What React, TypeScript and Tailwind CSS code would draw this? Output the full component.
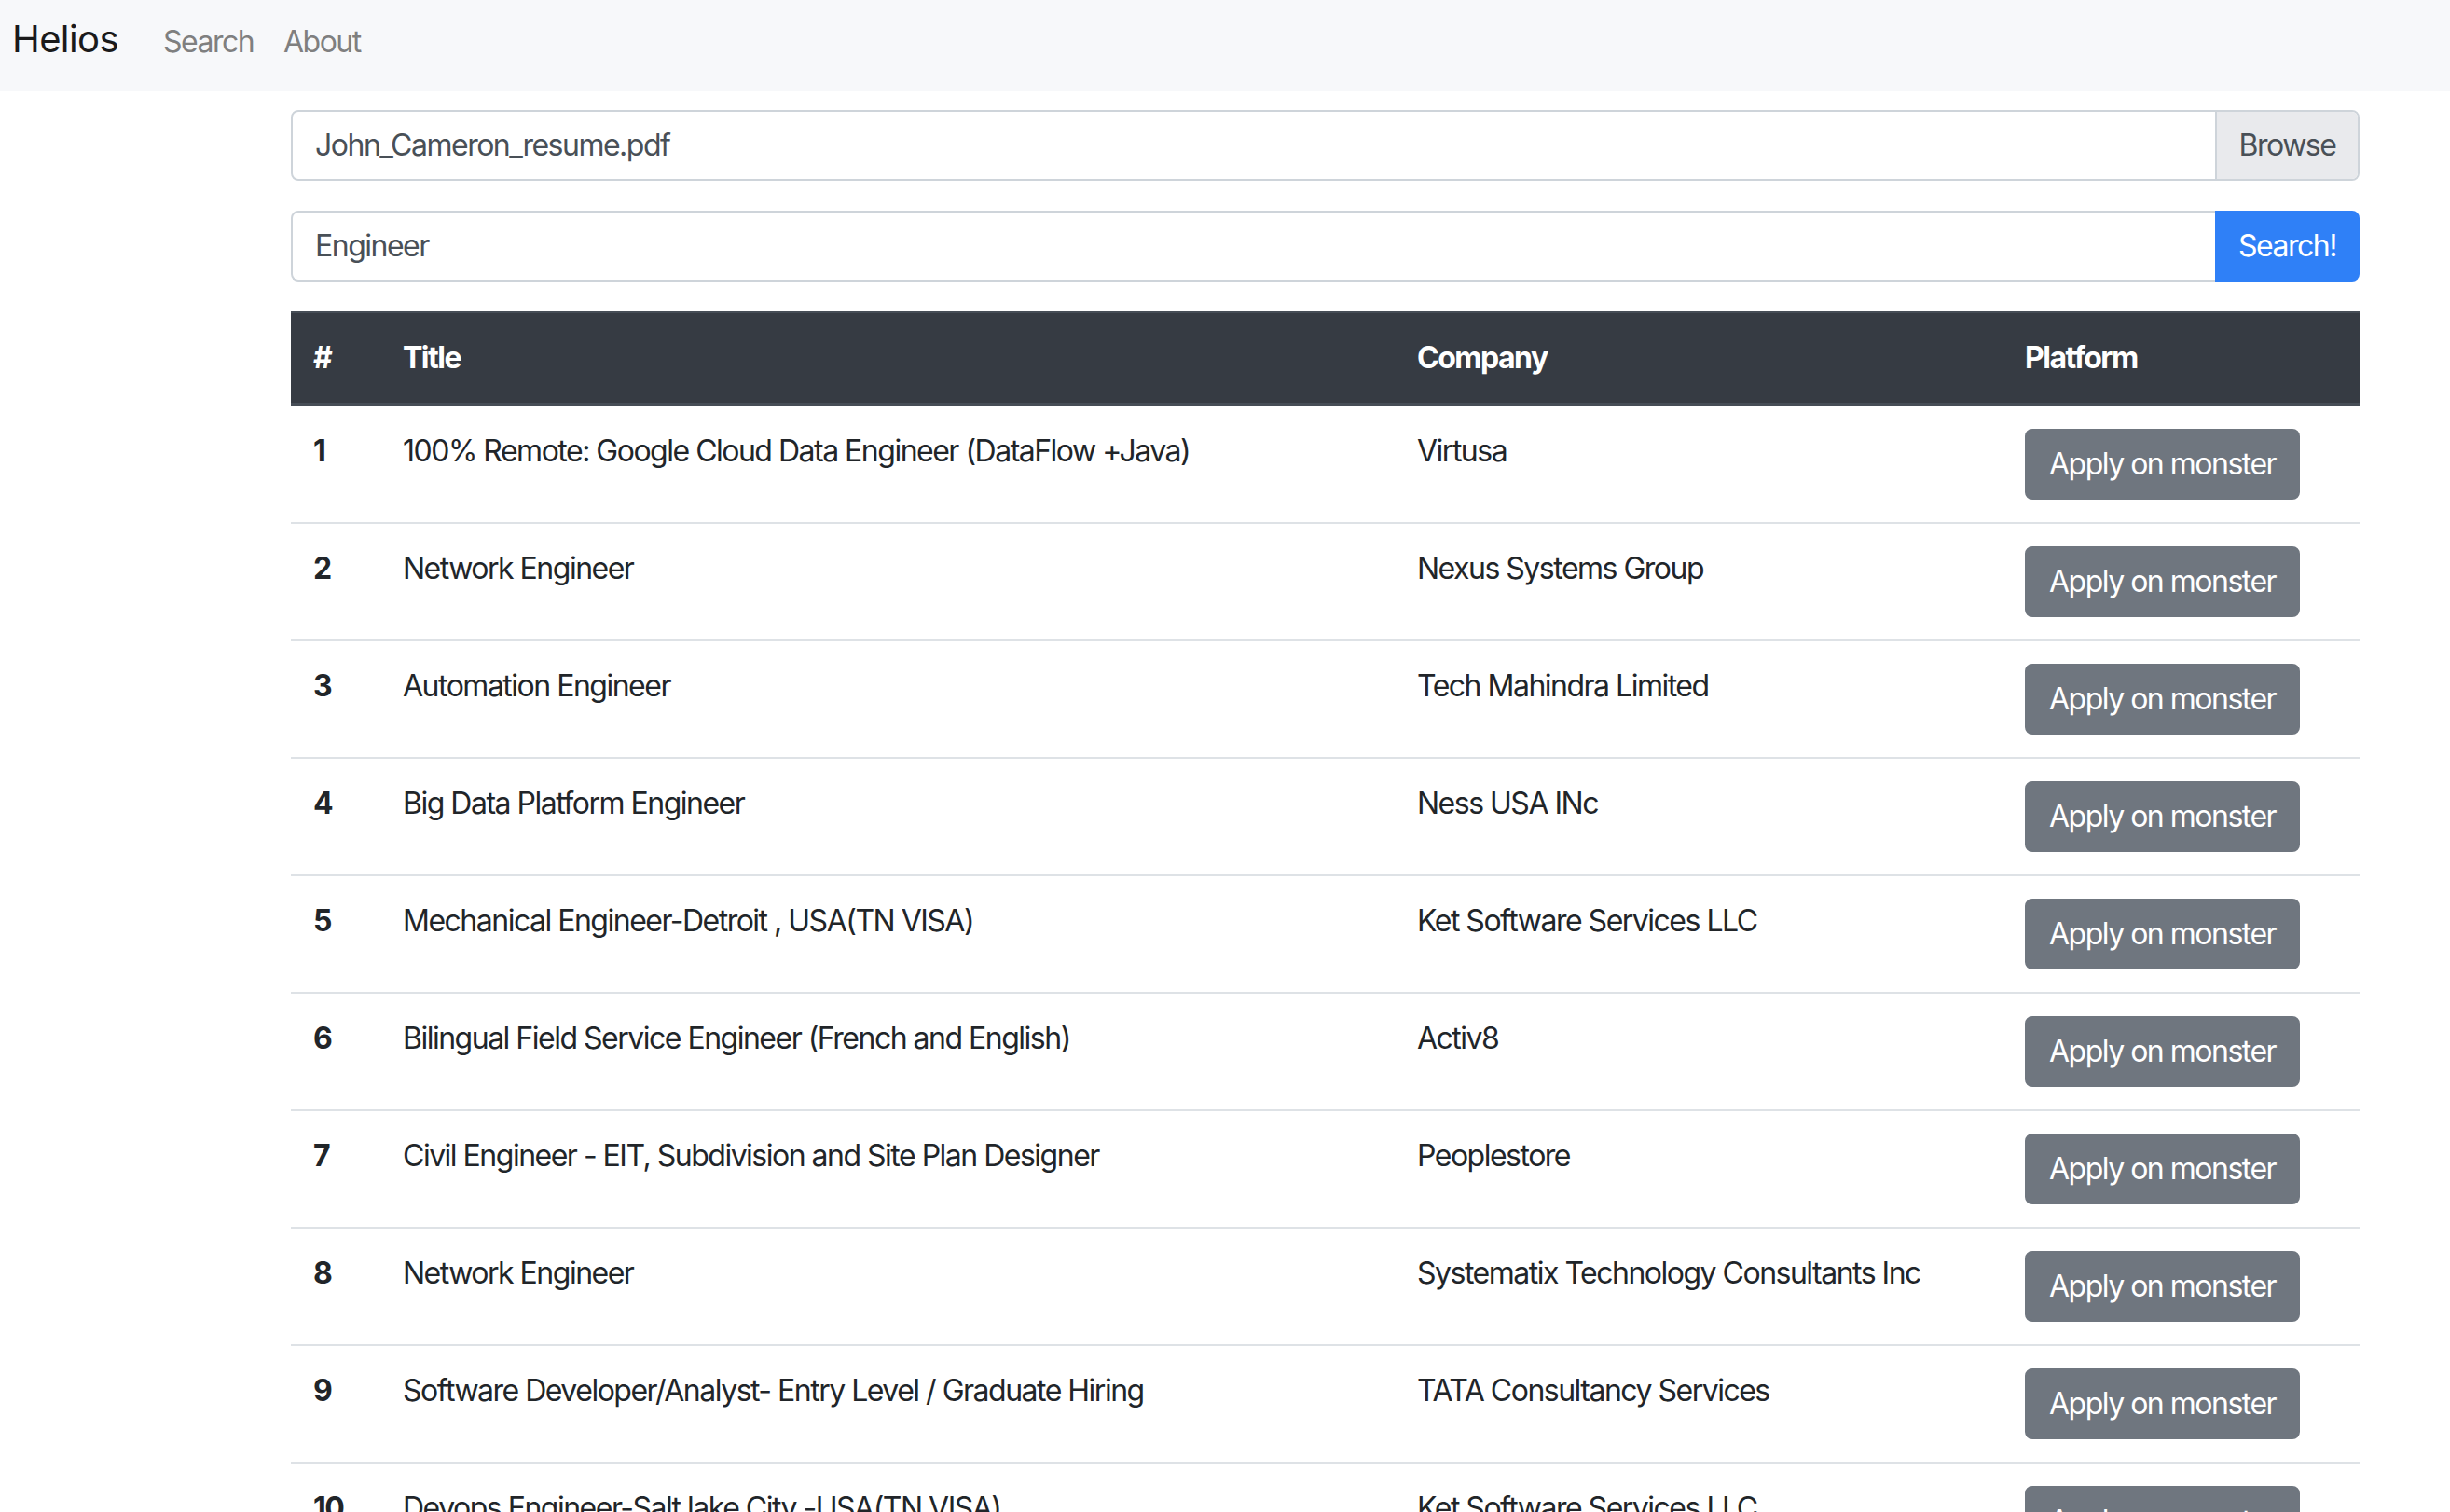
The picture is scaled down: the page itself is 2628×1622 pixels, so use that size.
import React from 'react';

interface Job {
  title: string;
  company: string;
}

const jobs: Job[] = [
  { title: '100% Remote: Google Cloud Data Engineer (DataFlow +Java)', company: 'Virtusa' },
  { title: 'Network Engineer', company: 'Nexus Systems Group' },
  { title: 'Automation Engineer', company: 'Tech Mahindra Limited' },
  { title: 'Big Data Platform Engineer', company: 'Ness USA INc' },
  { title: 'Mechanical Engineer-Detroit , USA(TN VISA)', company: 'Ket Software Services LLC' },
  { title: 'Bilingual Field Service Engineer (French and English)', company: 'Activ8' },
  { title: 'Civil Engineer - EIT, Subdivision and Site Plan Designer', company: 'Peoplestore' },
  { title: 'Network Engineer', company: 'Systematix Technology Consultants Inc' },
  { title: 'Software Developer/Analyst- Entry Level / Graduate Hiring', company: 'TATA Consultancy Services' },
  { title: 'Devops Engineer-Salt lake City -USA(TN VISA)', company: 'Ket Software Services LLC' },
];

export default function App() {
  return (
    <div
      className="min-h-screen bg-white text-[#212529] text-[32px] leading-[48px] tracking-[-1.5px]"
      style={{ fontFamily: 'Inter, "Noto Sans", sans-serif' }}
    >
      {/* Navbar */}
      <nav className="h-[98px] bg-[#f7f8fa] flex items-baseline pt-[12px] pl-[13px]">
        <a className="w-[162px] text-[40px] leading-[60px] tracking-[-0.6px] text-[#1a1a1a]">Helios</a>
        <a className="w-[129px] text-[#7f7f7f]">Search</a>
        <a className="text-[#7f7f7f]">About</a>
      </nav>

      <main className="pt-[20px] pl-[312px] w-[2531px]">
        {/* Resume upload */}
        <div className="flex h-[76px] border-2 border-[#ced4da] rounded-[8px] overflow-hidden mb-[32px]">
          <div className="flex-1 flex items-center px-[24px] text-[#495057]">John_Cameron_resume.pdf</div>
          <div className="w-[153px] flex items-center justify-center bg-[#e9eaed] border-l-2 border-[#ced4da] text-[#495057]">
            Browse
          </div>
        </div>

        {/* Search */}
        <div className="flex h-[76px] mb-[32px]">
          <div className="flex-1 flex items-center px-[24px] border-2 border-r-0 border-[#ced4da] rounded-l-[8px] text-[#495057]">
            Engineer
          </div>
          <button className="w-[155px] bg-[#2f80f7] text-white rounded-r-[8px]">Search!</button>
        </div>

        {/* Results */}
        <table className="w-full table-fixed border-collapse">
          <colgroup>
            <col className="w-[96px]" />
            <col className="w-[1088px]" />
            <col className="w-[652px]" />
            <col className="w-[383px]" />
          </colgroup>
          <thead>
            <tr className="bg-[#363b43] text-white">
              {['#', 'Title', 'Company', 'Platform'].map((h) => (
                <th
                  key={h}
                  className="text-left font-bold p-[24px] border-t-2 border-b-4 border-t-[#464d56] border-b-[#464d56] align-bottom"
                >
                  {h}
                </th>
              ))}
            </tr>
          </thead>
          <tbody>
            {jobs.map((job, i) => (
              <tr key={i}>
                <th className="text-left font-bold p-[24px] border-t-2 border-[#dee2e6] align-top">{i + 1}</th>
                <td className="p-[24px] border-t-2 border-[#dee2e6] align-top">{job.title}</td>
                <td className="p-[24px] border-t-2 border-[#dee2e6] align-top">{job.company}</td>
                <td className="p-[24px] border-t-2 border-[#dee2e6] align-top">
                  <button className="bg-[#6f767f] border-2 border-[#6f767f] text-white px-[24px] py-[12px] leading-[48px] rounded-[8px] whitespace-nowrap">
                    Apply on monster
                  </button>
                </td>
              </tr>
            ))}
          </tbody>
        </table>
      </main>
    </div>
  );
}
